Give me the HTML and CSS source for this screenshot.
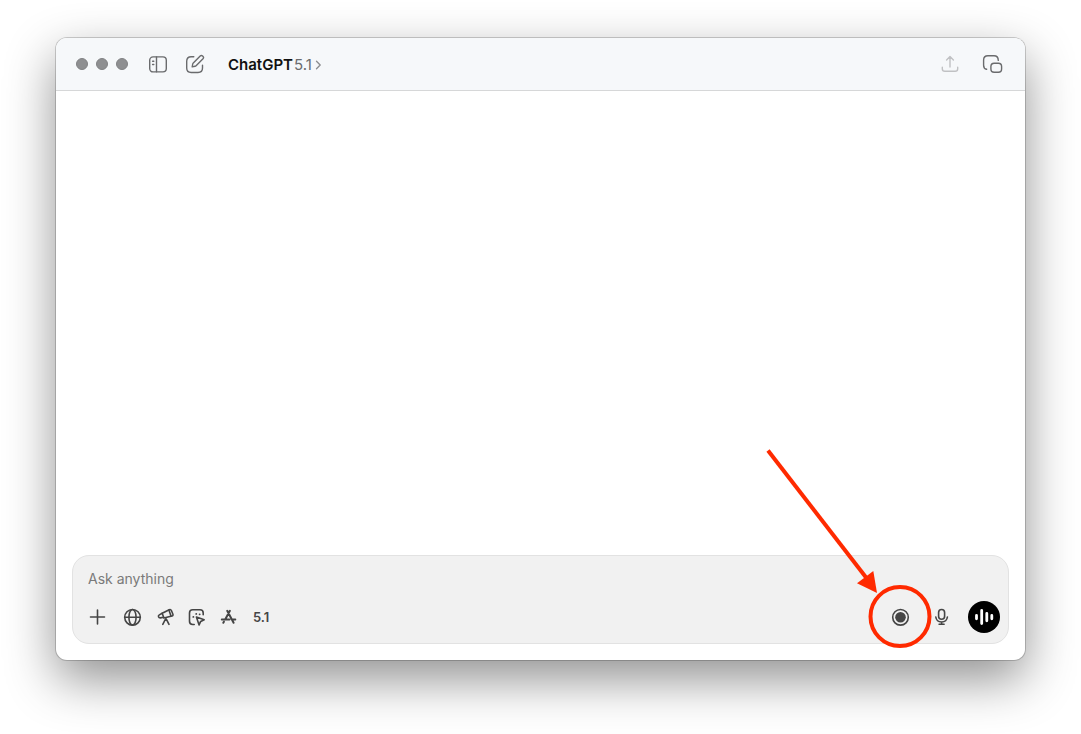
FILE: index.html
```html
<!doctype html>
<html lang="en">
    <head>
        <meta charset="utf-8">
        <meta name="viewport" content="width=device-width, initial-scale=1.0">
        <title>ChatGPT</title>
        <link rel="stylesheet" href="styles.css">
    </head>
    <body>
    <div class="window">
        <header class="titlebar">
            <div class="lights">
                <span class="light"></span>
                <span class="light"></span>
                <span class="light"></span>
            </div>
            <button class="icon-btn" type="button" aria-label="Toggle sidebar">
                <svg width="20" height="20" viewBox="0 0 20 20">
                    <rect x="1.7" y="2.9" width="16.6" height="15" rx="3.4"/>
                    <path d="M8.5 3v14.800M4.600 7.300h1.200M4.600 10.500h1.200"/>
                </svg>
            </button>
            <button class="icon-btn compose" type="button" aria-label="New chat">
                <svg width="20" height="20" viewBox="0 0 20 20">
                    <path d="M8.8 2.7H6.2Q1.7 2.7 1.7 7.2V14Q1.7 18.5 6.2 18.5H13Q17.5 18.5 17.5 14V11.3"/>
                    <path d="M7.2 12.9l.5-2.9q.1-.6.6-1.1l6.9-6.9q1.1-1 2.4 0l.4.4q1.1 1.2 0 2.4l-6.9 6.9q-.5.5-1.1.6z"/>
                </svg>
            </button>
            <button class="model" type="button">
                <span class="model-name">ChatGPT</span>
                <span class="model-version">5.1</span>
                <svg width="7" height="10" viewBox="0 0 7 10"><path d="M1.5 1.2L5.2 5 1.5 8.8"/></svg>
            </button>
            <button class="icon-btn share" type="button" aria-label="Share" disabled>
                <svg width="20" height="20" viewBox="0 0 20 20">
                    <path d="M10 13V2.8M6.6 6L10 2.6 13.4 6M2.3 13.3v1.4q0 2.6 2.6 2.6h10.2q2.6 0 2.6-2.6v-1.4"/>
                </svg>
            </button>
            <button class="icon-btn" type="button" aria-label="Open companion window">
                <svg width="22" height="20" viewBox="0 0 22 20">
                    <path d="M5.6 15.3Q2.6 14.6 2.6 11.2V6Q2.6 1.7 6.9 1.7H13Q17.2 1.7 17.3 6.4"/>
                    <rect x="9.9" y="9.2" width="10.700" height="9" rx="3.2"/>
                </svg>
            </button>
        </header>

        <main class="conversation"></main>

        <form class="composer">
            <input class="prompt" type="text" placeholder="Ask anything" aria-label="Ask anything">
            <div class="tools">
                <button class="tool" type="button" aria-label="Add">
                    <svg width="24" height="24" viewBox="0 0 24 24"><path d="M11.5 5v14M4.5 12h14"/></svg>
                </button>
                <button class="tool" type="button" aria-label="Search the web">
                    <svg width="24" height="24" viewBox="0 0 24 24">
                        <circle cx="13.5" cy="12.3" r="7.8"/>
                        <ellipse cx="13.5" cy="12.3" rx="3.6" ry="7.8"/>
                        <path d="M5.7 12.3h15.6"/>
                    </svg>
                </button>
                <button class="tool" type="button" aria-label="Deep research">
                    <svg width="24" height="24" viewBox="0 0 24 24">
                        <path d="M10.200 8.300L17.200 4.700q1.500-.7 2.200.8l1.500 3.700q.5 1.400-1 1.800l-8 2.100z"/>
                        <path d="M10.200 8.300L7.300 9.900q-1.200.7-.8 1.800t1.800 1.200l3.400-.7M16.900 5l2.100 6"/>
                        <path d="M13.200 14.600L10.800 19.300M14.600 14.600L17 19.300M13.900 13.300v2"/>
                    </svg>
                </button>
                <button class="tool" type="button" aria-label="Agent mode">
                    <svg width="24" height="24" viewBox="0 0 24 24">
                        <path d="M9.2 19.5H7.700q-3.200-.1-3.200-3.200V8q0-3.200 3.200-3.200h7.300q3.200 0 3.200 3.200v1.800"/>
                        <path d="M11.4 12l7.800 2.8-3.500 1.600-1.600 3.500z"/>
                        <path class="dots" d="M11.200 8.900h.1M14.600 9.300h.1M8.300 11.900h.1"/>
                    </svg>
                </button>
                <button class="tool apps" type="button" aria-label="Work with apps">
                    <svg width="24" height="24" viewBox="0 0 24 24">
                        <path d="M9.200 5.800l6.400 12M11.900 5.800L7.300 14.300M5.900 16.700l-.6 1.100M3.800 14.500h7.700M15 14.500h2.300"/>
                    </svg>
                </button>
                <button class="version" type="button">5.1</button>
                <button class="tool wide record" type="button" aria-label="Record">
                    <svg width="28" height="24" viewBox="0 0 28 24">
                        <circle cx="12.5" cy="12.3" r="7.8"/>
                        <circle class="solid" cx="12.5" cy="12.3" r="5.3"/>
                    </svg>
                </button>
                <button class="tool wide" type="button" aria-label="Dictate">
                    <svg width="28" height="24" viewBox="0 0 28 24">
                        <rect x="10.6" y="4.5" width="6" height="9.8" rx="3"/>
                        <path d="M7.8 12q.7 5 5.8 5t5.8-5M13.6 17v2.3M11.1 19.3h5"/>
                    </svg>
                </button>
                <button class="voice" type="button" aria-label="Voice mode">
                    <svg width="32" height="32" viewBox="0 0 32 32">
                        <path d="M8.5 14.4v3.4M13.7 9.5v13M18.8 12.4v7.4M23.8 14.4v3.4"/>
                    </svg>
                </button>
            </div>

            <!-- arrow and ring pointing at the record button -->
            <svg class="callout" width="180" height="210" viewBox="0 0 180 210">
                <path class="shaft" d="M8 10.500L108 140"/>
                <path class="head" d="M117 153L97 143.300 113.300 131z"/>
                <circle class="ring" cx="140" cy="176.500" r="29.500"/>
            </svg>
        </form>
    </div>
    </body>
</html>
```
FILE: styles.css
```css
* {
    box-sizing: border-box;
}
body {
    margin: 0;
    min-height: 100vh;
    padding: 38px 56px 74px;
    display: flex;
    background: #fff;
    font-family: Inter, "Liberation Sans", sans-serif;
}
button {
    display: flex;
    align-items: center;
    padding: 0;
    border: 0;
    background: none;
    font: inherit;
    color: inherit;
}
svg {
    display: block;
    fill: none;
    stroke: currentColor;
    stroke-linecap: round;
    stroke-linejoin: round;
}
.window {
    flex: 1;
    display: flex;
    flex-direction: column;
    border-radius: 11px;
    background: #fff;
    box-shadow: 0 0 0 1px rgba(0, 0, 0, 0.18), 0 19px 50px rgba(0, 0, 0, 0.44);
}

/* title bar */
.titlebar {
    display: flex;
    align-items: center;
    height: 53px;
    padding: 0 22px 0 20px;
    border-bottom: 1px solid #d6d7d8;
    border-radius: 11px 11px 0 0;
    background: #f6f8fa;
    color: #6a6b6d;
}
.lights {
    display: flex;
    gap: 8px;
    margin-right: 20px;
}
.light {
    width: 12px;
    height: 12px;
    border: 1px solid #818284;
    border-radius: 50%;
    background: #8e8f91;
}
.icon-btn svg {
    stroke-width: 1.4;
}
.compose {
    margin-left: 17px;
}
.model {
    margin-left: 23px;
    padding-top: 1px;
    font-size: 15px;
    line-height: 20px;
}
.model-name {
    margin-right: 1px;
    font-weight: 600;
    color: #111;
}
.model-version {
    margin-right: 3px;
}
.model svg {
    stroke-width: 1.3;
    color: #8b8c8e;
}
.share {
    margin: 0 21px 0 auto;
    color: #c0c1c3;
}
.conversation {
    flex: 1;
}

/* composer */
.composer {
    position: relative;
    margin: 0 16px 16px;
    padding: 13px 8px 10px 13px;
    border: 1px solid #e2e2e2;
    border-radius: 17px;
    background: #f1f1f1;
    color: #454545;
}
.prompt {
    display: block;
    width: 100%;
    height: 20px;
    margin-bottom: 12px;
    padding: 0 2px;
    border: 0;
    outline: 0;
    background: none;
    font: 14px/20px Inter, "Liberation Sans", sans-serif;
}
.prompt::placeholder {
    color: #7a7a7a;
}
.tools {
    display: flex;
    align-items: center;
    gap: 9px;
}
.tool svg {
    stroke-width: 1.6;
}
.tool .solid {
    fill: currentColor;
    stroke: none;
}
.tool .dots {
    stroke-width: 1.8;
}
.apps svg {
    stroke-width: 2;
}
.version {
    padding: 0 2px;
    font-size: 13px;
    font-weight: 600;
    line-height: 20px;
}
.wide {
    margin-right: 3px;
}
.record {
    margin-left: auto;
}
.voice {
    border-radius: 50%;
    background: #000;
    color: #fff;
}
.voice svg {
    stroke-width: 2.8;
}
.callout {
    position: absolute;
    right: 68px;
    bottom: -7px;
    pointer-events: none;
    color: #ff2a00;
    stroke-width: 4;
}
.callout .shaft {
    stroke-linecap: butt;
}
.callout .head {
    fill: currentColor;
    stroke: none;
}
```
